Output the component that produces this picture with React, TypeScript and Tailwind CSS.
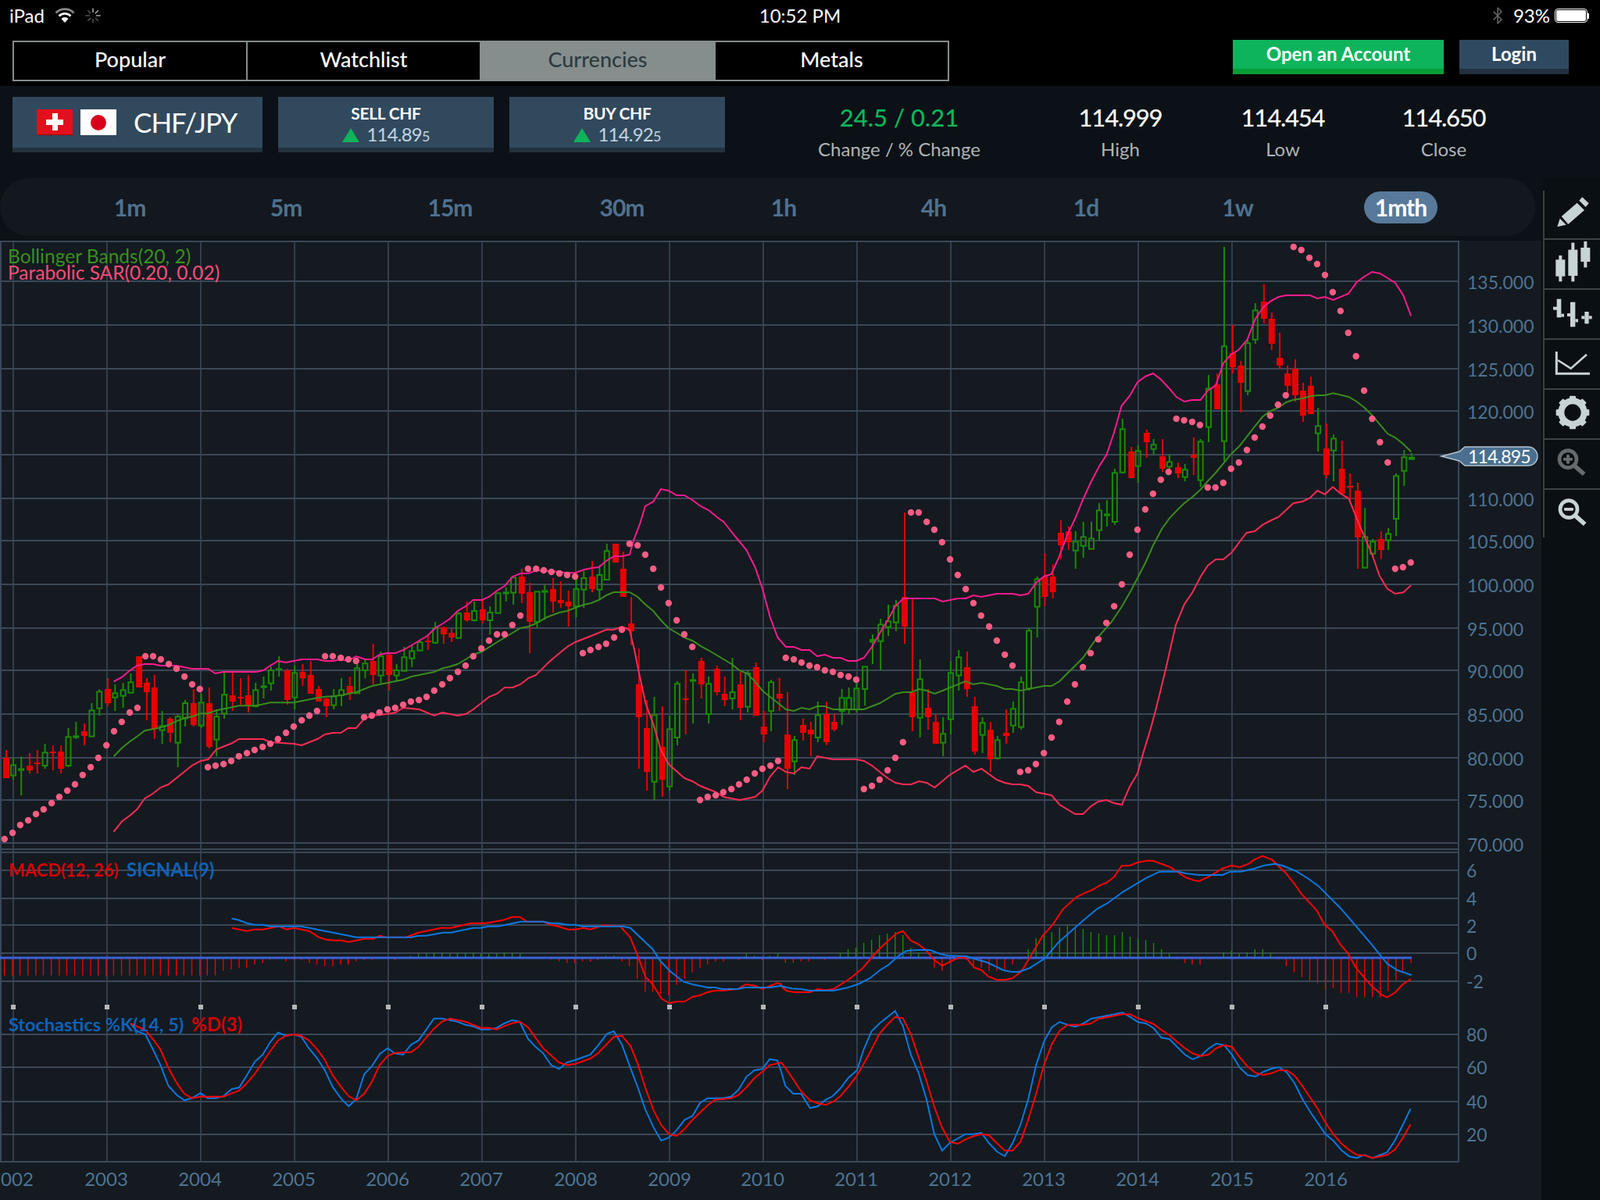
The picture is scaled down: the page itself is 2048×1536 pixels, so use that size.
import { Bluetooth } from "lucide-react";

// chart data is kept in the pixel grid of three main-chart crops and two indicator crops
type Map = (x: number, y: number) => [number, number];
const A: Map = (x, y) => [x / 2.24, 640 + y / 3];
const B: Map = (x, y) => [700 + x / 2.24, 640 + y / 3];
const C: Map = (x, y) => [1340 + x / 2.613, 300 + y / 3];
const D: Map = (x, y) => [x / 1.568, 1080 + y / 3];
const E: Map = (x, y) => [1000 + x / 1.496, 1080 + y / 3];

type Candle = [0 | 1, number, number, number, number, number];
const G = 1;
const R = 0;

const candlesA: Candle[] = [
  [R, 18, 960, 990, 1068, 1068], [G, 38, 990, 1018, 1058, 1074], [G, 61, 985, 1030, 1040, 1134], [R, 85, 972, 1020, 1038, 1050],
  [R, 107, 960, 1008, 1014, 1050], [G, 129, 936, 970, 1020, 1032], [R, 152, 942, 966, 972, 1038], [R, 175, 942, 966, 1032, 1050],
  [G, 196, 876, 910, 1020, 1026], [G, 218, 852, 904, 914, 918], [R, 242, 858, 888, 906, 942], [G, 263, 780, 808, 908, 908],
  [G, 285, 726, 736, 800, 828], [R, 309, 684, 726, 780, 792], [G, 330, 708, 742, 758, 810], [G, 353, 702, 730, 752, 798],
  [G, 375, 666, 700, 740, 742], [R, 399, 600, 600, 720, 720], [R, 421, 684, 702, 738, 846], [R, 443, 672, 720, 880, 918],
  [G, 465, 810, 868, 884, 936], [R, 488, 834, 840, 894, 930], [G, 510, 824, 832, 932, 1026], [G, 531, 768, 780, 838, 870],
  [R, 555, 726, 780, 864, 870], [G, 577, 744, 778, 866, 876], [R, 600, 720, 780, 948, 954], [G, 621, 810, 832, 920, 984],
  [G, 643, 660, 748, 820, 840], [R, 667, 660, 750, 774, 810], [R, 690, 684, 756, 762, 786], [R, 712, 672, 750, 792, 816],
  [G, 733, 702, 730, 792, 796], [G, 756, 678, 712, 722, 762], [G, 777, 640, 654, 704, 732], [G, 800, 600, 646, 652, 678],
  [R, 824, 648, 654, 768, 786], [G, 845, 636, 664, 758, 804], [R, 868, 630, 660, 684, 714], [R, 891, 618, 672, 744, 744],
  [R, 914, 714, 726, 774, 774], [R, 936, 760, 762, 792, 834], [G, 957, 726, 754, 788, 804], [G, 979, 684, 730, 750, 792],
  [R, 1003, 678, 714, 744, 768], [G, 1024, 630, 646, 742, 742], [G, 1047, 612, 628, 654, 684], [R, 1070, 552, 618, 672, 708],
  [G, 1092, 582, 600, 674, 704], [R, 1116, 588, 594, 672, 732], [G, 1137, 630, 654, 674, 696], [G, 1159, 564, 604, 656, 660],
  [G, 1181, 558, 580, 608, 642], [G, 1204, 540, 546, 578, 580], [R, 1227, 516, 540, 546, 576], [G, 1248, 468, 492, 548, 552],
  [R, 1272, 486, 488, 516, 552], [R, 1295, 492, 510, 528, 546], [G, 1315, 430, 436, 530, 530], [R, 1339, 390, 432, 462, 468],
  [G, 1360, 390, 426, 462, 466], [R, 1384, 384, 420, 462, 474], [G, 1405, 408, 432, 462, 516], [G, 1428, 355, 358, 434, 436],
  [G, 1451, 336, 352, 362, 390], [G, 1472, 298, 298, 356, 402], [R, 1496, 264, 294, 360, 396], [R, 1519, 318, 354, 468, 588],
  [G, 1540, 352, 352, 468, 490], [G, 1562, 326, 346, 356, 460],
];

const candlesB: Candle[] = [
  [R, 18, 300, 342, 390, 432], [R, 40, 312, 384, 396, 414], [R, 62, 348, 390, 408, 486], [G, 84, 300, 342, 408, 450],
  [G, 106, 272, 300, 344, 414], [R, 130, 234, 294, 342, 354], [G, 151, 250, 288, 344, 380], [G, 172, 168, 196, 306, 308],
  [R, 197, 168, 168, 240, 240], [R, 219, 198, 264, 372, 372], [R, 242, 372, 474, 504, 558], [R, 264, 570, 708, 834, 1032],
  [R, 287, 768, 876, 1044, 1116], [G, 308, 756, 826, 1082, 1152], [R, 331, 792, 948, 1074, 1140], [G, 352, 828, 880, 1100, 1116],
  [G, 374, 696, 706, 912, 942], [R, 398, 654, 762, 768, 900], [G, 419, 666, 688, 698, 858], [R, 443, 606, 618, 708, 762],
  [G, 464, 678, 706, 822, 858], [R, 488, 636, 648, 738, 750], [R, 510, 678, 744, 768, 792], [G, 532, 606, 738, 762, 804],
  [R, 555, 660, 708, 798, 846], [G, 576, 654, 666, 794, 816], [R, 600, 624, 642, 828, 828], [R, 622, 810, 870, 900, 930],
  [G, 643, 690, 700, 810, 888], [R, 667, 684, 744, 762, 810], [R, 690, 738, 900, 1032, 1110], [G, 710, 906, 922, 1004, 1056],
  [R, 735, 840, 864, 894, 924], [R, 757, 852, 882, 900, 984], [G, 777, 774, 826, 912, 930], [R, 802, 774, 822, 930, 942],
  [R, 824, 822, 852, 882, 888], [G, 846, 726, 760, 810, 864], [G, 866, 720, 760, 804, 822], [G, 888, 700, 724, 804, 816],
  [G, 912, 640, 640, 726, 790], [G, 934, 516, 534, 548, 630], [G, 957, 456, 478, 542, 654], [G, 979, 402, 466, 488, 522],
  [G, 1001, 384, 406, 470, 504], [R, 1026, 48, 372, 486, 552], [R, 1048, 378, 738, 834, 888], [G, 1070, 612, 688, 836, 912],
  [R, 1093, 726, 798, 834, 882], [R, 1115, 822, 852, 936, 936], [G, 1136, 834, 898, 932, 984], [G, 1158, 618, 664, 842, 900],
  [G, 1181, 576, 604, 674, 732], [R, 1205, 582, 642, 726, 756], [R, 1227, 756, 792, 966, 978], [G, 1249, 834, 856, 902, 972],
  [R, 1272, 852, 882, 996, 1044], [G, 1292, 906, 922, 992, 996], [R, 1317, 804, 894, 906, 936], [G, 1337, 774, 802, 866, 894],
  [G, 1360, 678, 700, 872, 882], [G, 1382, 492, 502, 724, 732], [G, 1406, 294, 304, 410, 528], [R, 1428, 204, 294, 372, 408],
];

const candlesC: Candle[] = [
  [R, 20, 1266, 1314, 1374, 1398], [R, 47, 1098, 1146, 1194, 1248], [R, 73, 1122, 1140, 1182, 1212], [G, 96, 1140, 1180, 1214, 1284],
  [G, 122, 1104, 1162, 1196, 1242], [G, 149, 1104, 1168, 1208, 1208], [G, 175, 1032, 1060, 1136, 1176], [G, 201, 1020, 1072, 1082, 1122],
  [G, 227, 900, 916, 1104, 1116], [G, 253, 708, 748, 914, 918], [R, 283, 816, 834, 936, 936], [G, 305, 810, 832, 890, 954],
  [R, 334, 750, 762, 798, 858], [G, 357, 786, 808, 824, 846], [R, 387, 786, 852, 900, 912], [G, 410, 846, 874, 892, 900],
  [R, 439, 876, 894, 918, 936], [G, 462, 882, 904, 932, 948], [R, 491, 780, 846, 858, 924], [G, 514, 786, 796, 944, 970],
  [G, 541, 540, 592, 740, 798], [R, 570, 534, 576, 672, 672], [G, 593, 48, 430, 794, 870], [R, 622, 348, 456, 510, 534],
  [R, 649, 486, 504, 570, 684], [G, 672, 402, 418, 602, 618], [G, 697, 264, 292, 404, 420], [R, 726, 192, 258, 324, 342],
  [R, 752, 300, 324, 420, 444], [R, 779, 378, 474, 504, 516], [R, 805, 504, 534, 582, 610], [R, 831, 480, 516, 618, 642],
  [R, 857, 570, 600, 696, 720], [R, 883, 546, 582, 690, 690], [G, 907, 666, 736, 764, 834], [R, 935, 726, 822, 924, 936],
  [G, 959, 768, 784, 830, 948], [R, 987, 792, 900, 996, 996], [R, 1014, 918, 966, 972, 1020], [R, 1040, 954, 984, 1164, 1284],
  [G, 1064, 1050, 1162, 1280, 1280], [G, 1090, 1170, 1180, 1226, 1236], [R, 1118, 1140, 1170, 1212, 1248], [G, 1142, 1128, 1150, 1174, 1212],
  [G, 1168, 918, 928, 1092, 1158], [G, 1195, 828, 856, 908, 966], [G, 1220, 840, 854, 866, 866],
];

const up4 = [326,697,350,680,372,655,393,636,415,630,438,630,460,636,483,636,505,636,528,642,550,648,597,648,617,666,640,660,735,660,755,654,775,636,797,618,820,624,842,618,865,612,910,612,932,618,955,618,977,612,998,618,1021,600,1047,612,1067,612,1088,594,1110,588,1134,588,1156,576,1180,558,1202,540,1225,522,1248,492,1270,474,1290,456,1312,426,1335,408,1357,384,1382,384,1402,372,1425,348,1447,330,1470,294,1492,282,1515,282,1537,270,1568,272];
const up5 = [36,276,58,280,81,280,106,268,127,262,149,258,170,234,192,216,215,216,237,210,250,150,267,90,282,24,305,6,327,-42,349,-36,372,-18,394,-18,417,0,441,24,464,39,491,69,507,84,528,120,550,156,572,192,597,258,618,340,640,450,662,528,685,564,708,564,730,576,753,576,775,600,797,594,820,606,842,606,864,618,887,618,909,606,932,564,955,510,977,462,999,408,1022,378,1112,378,1135,390,1178,378,1201,378,1223,366,1246,372,1290,360,1335,360,1358,366,1380,360,1403,318,1425,294];
const up6 = [15,1305,40,1240,70,1150,95,1090,120,1020,148,950,175,890,200,845,225,760,250,658,277,620,303,568,330,545,355,534,382,558,408,590,434,625,460,642,486,636,514,636,538,600,565,580,590,495,615,462,640,445,670,405,697,325,724,280,750,255,775,240,800,234,880,234,905,246,930,240,958,252,1008,228,1036,184,1062,162,1088,144,1114,150,1140,168,1165,186,1192,234,1218,313];

const mid4 = [326,985,350,952,372,928,393,908,415,886,438,880,460,874,483,864,505,850,528,838,550,832,575,820,597,820,620,808,665,796,685,790,735,790,775,778,842,778,865,772,910,760,932,755,955,754,977,750,1021,738,1067,714,1134,696,1156,690,1180,678,1245,660,1270,646,1290,640,1312,630,1335,612,1357,594,1382,582,1425,546,1470,510,1492,492,1515,486,1537,474,1568,450];
const mid5 = [36,432,58,426,81,414,106,402,127,396,149,384,170,366,192,354,237,354,260,372,283,402,305,426,327,462,349,492,372,510,394,528,417,540,440,560,462,576,485,594,507,612,530,630,552,654,574,666,596,696,618,732,640,756,663,780,685,804,708,810,730,798,753,804,775,792,797,792,820,804,909,804,955,780,1000,744,1022,738,1045,738,1067,726,1089,732,1112,744,1135,732,1200,696,1223,708,1246,702,1290,714,1313,726,1335,726,1358,732,1403,720,1425,714,1447,714,1470,696,1492,666,1515,636,1537,606,1568,546];
const midJoin: [number, number][] = [[1406, 815]];
const mid6 = [215,1490,250,1430,280,1370,303,1320,330,1260,355,1195,385,1130,410,1090,435,1060,460,1032,487,1008,514,980,540,945,565,915,590,880,615,845,645,812,670,775,697,735,722,700,745,680,775,665,800,645,825,635,855,630,880,622,905,618,930,618,958,610,1010,624,1036,642,1062,665,1088,695,1114,730,1140,766,1165,780,1192,805,1218,835];

const low4 = [326,1274,350,1234,372,1212,393,1188,415,1146,438,1128,460,1104,483,1092,528,1044,550,1020,575,1002,597,996,620,958,665,934,685,918,755,918,775,930,842,936,865,942,910,918,932,900,955,894,977,894,998,876,1021,876,1044,840,1067,828,1110,822,1134,816,1156,798,1202,804,1245,828,1268,816,1312,828,1335,822,1357,804,1382,778,1402,756,1425,744,1447,720,1470,720,1492,708,1515,684,1537,672,1568,630];
const low5 = [20,606,58,564,81,546,127,522,170,498,192,498,215,486,237,498,250,570,262,650,283,780,305,860,327,960,349,1014,394,1068,417,1080,440,1098,485,1122,507,1140,552,1152,597,1140,618,1116,640,1062,663,1026,685,1044,708,1050,730,1026,753,1032,775,984,820,996,887,996,909,1002,932,1020,977,1068,1000,1086,1022,1092,1045,1092,1067,1080,1089,1086,1112,1104,1157,1054,1200,1020,1223,1044,1246,1032,1290,1074,1313,1086,1335,1092,1358,1092,1380,1098,1403,1122,1447,1134,1470,1170,1515,1206,1537,1206,1560,1176];
const lowJoin: [number, number][] = [[1406, 1026], [1416, 1024], [1426, 1028], [1436, 1030], [1446, 1007], [1456, 990], [1463, 965], [1473, 932], [1479, 910], [1492, 857], [1505, 800]];
const low6 = [460,1420,487,1375,514,1315,538,1272,565,1248,590,1248,618,1222,645,1180,668,1146,695,1140,722,1115,750,1098,775,1085,800,1058,825,1032,855,1026,880,1012,905,984,930,998,956,970,982,995,1010,1015,1036,1090,1062,1160,1088,1230,1112,1310,1138,1360,1165,1380,1192,1375,1218,1348];

const sar4 = [13,1302,36,1278,58,1248,81,1230,103,1206,125,1188,148,1164,170,1140,193,1116,215,1092,237,1056,260,1026,282,990,305,942,327,888,349,852,372,816,394,798,417,600,439,600,461,612,484,630,506,648,529,678,551,708,573,726,596,1026,618,1020,641,1014,663,1002,685,984,708,972,730,960,753,948,775,936,797,918,820,894,842,870,865,846,887,828,909,810,932,600,954,600,977,606,999,612,1021,618,1044,834,1066,828,1088,816,1111,804,1133,798,1156,786,1178,774,1201,768,1223,756,1245,732,1268,708,1290,684,1313,660,1335,636,1357,600,1380,570,1402,540,1425,516,1447,516,1469,480,1492,444,1514,264,1537,264,1559,270];
const sar5 = [13,276,36,282,58,288,81,294,103,588,125,576,148,564,170,552,193,528,215,498,237,168,260,174,282,210,305,264,327,336,349,396,372,462,394,516,417,564,439,1152,461,1140,484,1134,506,1122,529,1110,551,1092,573,1074,596,1050,618,1032,641,1020,663,1002,685,606,708,612,730,624,753,636,775,642,797,654,820,660,842,672,865,678,887,690,909,1110,932,1098,954,1074,977,1038,999,990,1021,930,1044,48,1066,48,1089,84,1111,114,1133,162,1156,228,1178,288,1201,342,1223,396,1245,444,1268,486,1290,540,1313,594,1335,636,1357,1044,1380,1038,1402,1014,1425,972,1447,912,1469,852,1492,774,1514,708,1537,642,1559,588];
const sar6 = [172,1555,199,1492,225,1428,251,1344,277,1230,303,1134,329,1056,355,996,381,942,407,912,433,708,459,714,486,720,512,732,538,972,564,972,590,954,616,900,642,876,669,828,695,780,721,738,747,696,773,654,799,618,825,48,851,60,878,90,904,114,930,156,956,222,982,294,1008,378,1034,468,1061,600,1088,708,1114,798,1140,876,1165,1284,1191,1278,1217,1260];

const sigD = [465,287,480,293,496,305,511,311,527,311,543,317,605,317,700,353,715,359,825,359,840,353,855,353,890,341,905,341,950,323,965,323,980,317,1000,317,1045,299,1090,299,1105,305,1120,305,1140,311,1155,311,1170,317,1250,317,1265,323,1280,350,1310,405,1325,450,1345,490,1372,530,1390,540,1420,552,1435,552,1450,558,1480,558,1495,552,1545,552,1568,545];
const macdD = [465,323,495,335,510,329,527,329,560,317,575,329,590,323,620,335,640,359,655,368,670,371,685,371,700,377,730,365,750,365,762,353,775,359,815,359,840,341,885,323,905,323,945,305,975,305,1010,293,1028,281,1043,281,1058,299,1090,299,1105,311,1120,317,1140,329,1155,329,1170,323,1185,329,1210,313,1245,317,1265,360,1280,430,1295,510,1310,540,1328,595,1343,612,1358,606,1374,606,1390,588,1405,582,1420,570,1435,564,1450,564,1480,558,1497,540,1515,545,1530,558,1560,535,1568,540];
const sigE = [0,547,20,556,38,558,55,564,100,564,128,552,150,537,170,516,190,484,205,466,225,430,240,411,260,408,285,408,305,424,320,430,355,432,375,445,395,456,425,485,440,492,455,492,475,478,505,440,530,380,575,300,605,250,625,228,655,184,700,130,725,107,760,107,775,114,800,120,845,120,860,107,880,107,905,96,925,83,945,77,960,84,985,104,1010,135,1030,165,1070,245,1100,315,1130,385,1160,460,1180,486,1195,496,1207,505];
const macdE = [0,547,10,565,25,570,55,570,70,558,85,562,100,558,130,520,155,480,175,432,190,400,220,345,233,335,248,372,262,385,278,410,292,445,308,468,322,455,340,436,355,440,370,476,383,485,397,510,413,523,428,523,443,516,460,490,475,440,500,355,520,310,540,250,565,205,580,190,595,178,610,160,622,150,637,128,652,84,667,84,682,72,700,65,712,65,745,90,775,130,790,140,800,144,820,125,845,95,862,83,878,90,895,77,905,62,922,47,940,62,965,110,985,160,995,190,1025,255,1040,310,1055,335,1070,385,1085,420,1100,475,1130,545,1150,580,1160,590,1175,572,1190,540,1205,520];

const histD: number[] = [9,506,25,506,40,506,56,506,72,506,87,506,103,506,119,506,134,506,150,506,166,506,182,506,197,506,213,506,228,506,244,506,260,506,275,506,291,506,307,506,322,506,338,506,354,506,369,506,385,506,401,506,416,506,432,506,448,488,464,482,480,476,495,476,511,464,527,458,542,446,574,452,590,446,605,446,621,458,636,464,652,470,668,470,684,464,699,464,715,452,731,446,746,446,793,446,824,430,840,422,856,422,871,418,887,418,903,422,918,418,934,418,950,418,965,422,981,422,997,422,1012,418,1028,418,1044,422,1106,444,1122,452,1138,458,1153,458,1169,452,1185,452,1200,446,1216,430,1232,430,1248,452,1263,470,1279,518,1295,568,1310,570,1326,576,1342,582,1358,542,1374,518,1389,494,1405,476,1420,464,1436,452,1452,452,1483,446,1498,422,1514,430,1530,446,1545,430,1561,422];
const histE: number[] = [8,458,23,458,38,452,53,452,83,446,113,418,128,405,143,399,158,381,173,369,188,351,203,345,218,339,233,351,248,399,263,417,278,444,293,476,308,488,323,458,338,444,353,444,368,476,383,476,398,488,413,488,428,482,443,464,458,444,473,405,488,363,503,345,518,339,533,321,548,315,563,321,578,327,593,339,608,345,623,351,638,351,653,339,668,357,683,363,698,369,713,381,728,405,743,421,758,444,773,458,787,464,802,464,817,444,847,417,862,411,877,421,892,417,907,405,922,405,937,417,952,444,967,470,982,494,997,512,1012,524,1027,536,1042,560,1057,554,1072,572,1087,572,1102,590,1117,590,1132,590,1147,590,1162,566,1177,524,1190,488,1206,458];

const kD = [262,690,275,720,292,732,307,790,322,850,338,930,355,965,370,985,385,977,402,958,417,977,432,977,448,970,465,942,480,936,495,890,511,838,527,810,543,760,558,725,574,737,590,732,605,742,620,785,637,825,652,870,668,935,685,980,700,1008,715,980,731,885,746,855,762,808,778,785,793,805,809,810,825,772,840,755,855,715,871,671,887,671,903,677,918,683,934,695,950,701,965,713,981,713,997,707,1012,690,1028,677,1043,683,1060,750,1075,780,1090,805,1106,850,1122,865,1138,840,1155,830,1170,820,1185,810,1200,775,1218,730,1232,720,1248,770,1265,860,1280,935,1295,1020,1312,1090,1327,1140,1343,1128,1358,1100,1374,1060,1390,1045,1405,995,1420,977,1450,977,1467,971,1482,945,1498,895,1514,870,1530,865,1545,827,1560,832,1568,875];
const dD = [262,690,292,716,307,750,322,790,338,860,355,920,370,960,385,977,402,971,448,971,480,948,495,920,511,885,527,840,543,795,558,755,574,737,590,732,605,738,620,755,637,790,652,830,668,890,685,935,700,970,715,985,731,960,746,915,762,850,778,815,793,803,825,800,840,780,855,745,871,710,887,683,903,671,934,683,965,707,981,707,997,713,1012,701,1028,689,1043,683,1060,705,1075,745,1090,785,1122,840,1138,850,1155,845,1185,825,1200,805,1232,742,1248,737,1265,775,1280,845,1295,935,1312,1025,1327,1080,1343,1115,1358,1122,1374,1095,1390,1060,1420,1005,1435,983,1467,977,1482,965,1498,935,1514,900,1530,875,1545,850,1568,840];
const kE = [8,930,23,960,38,960,55,1015,70,1008,85,983,98,970,113,940,128,900,145,870,158,790,173,720,188,690,218,642,233,700,248,810,263,880,278,980,293,1115,308,1178,323,1148,353,1115,368,1115,383,1110,398,1150,413,1182,428,1200,443,1150,458,1080,473,980,488,850,503,760,518,705,533,684,548,695,563,703,578,690,593,672,638,655,653,648,668,665,683,685,698,690,713,708,728,745,743,750,773,810,788,828,803,815,818,787,833,767,848,773,863,810,878,860,893,888,908,894,923,876,938,864,953,858,968,878,983,920,998,980,1013,1030,1042,1115,1057,1140,1072,1175,1087,1200,1102,1207,1117,1195,1132,1207,1160,1185,1175,1140,1190,1080,1205,1018];
const dE = [8,860,23,905,38,950,55,985,70,997,85,1003,100,990,113,970,130,930,145,890,165,820,188,730,203,695,218,665,233,670,248,730,263,820,278,910,293,1010,308,1090,323,1145,338,1152,353,1135,368,1123,383,1115,398,1120,413,1150,428,1178,443,1178,458,1145,473,1060,488,960,503,850,518,770,533,718,548,695,578,695,593,690,608,672,653,655,668,655,683,670,713,692,728,715,743,735,773,785,788,805,803,815,818,810,833,785,848,773,863,780,878,820,893,855,908,880,923,888,938,882,953,870,968,870,983,890,998,930,1013,975,1028,1020,1042,1070,1057,1115,1072,1150,1087,1175,1102,1195,1117,1197,1132,1207,1160,1195,1175,1175,1190,1130,1205,1078];

const conv = (flat: number[], m: Map) => {
  const out: [number, number][] = [];
  for (let i = 0; i < flat.length; i += 2) out.push(m(flat[i], flat[i + 1]));
  return out;
};
const pts = (p: [number, number][]) => p.map(([x, y]) => `${x.toFixed(1)},${y.toFixed(1)}`).join(" ");

const upper = pts([...conv(up4, A), ...conv(up5, B), ...conv(up6, C)]);
const middle = pts([...conv(mid4, A), ...conv(mid5, B), ...midJoin, ...conv(mid6, C)]);
const lower = pts([...conv(low4, A), ...conv(low5, B), ...lowJoin, ...conv(low6, C)]);
const sarDots = [...conv(sar4, A), ...conv(sar5, B), ...conv(sar6, C)];
const signal = pts([...conv(sigD, D), ...conv(sigE, E)]);
const macd = pts([...conv(macdD, D), ...conv(macdE, E)]);
const stochK = pts([...conv(kD, D), ...conv(kE, E)]);
const stochD = pts([...conv(dD, D), ...conv(dE, E)]);
const ZERO = 1226;
const hist = [...conv(histD, D), ...conv(histE, E)];

const allCandles = [
  ...candlesA.map((c) => [c, A] as const),
  ...candlesB.map((c) => [c, B] as const),
  ...candlesC.map((c) => [c, C] as const),
];

const vGrid = Array.from({ length: 15 }, (_, i) => 17 + i * 120);
const hGrid = [309, 360, 416, 472, 526, 582, 638, 692, 748, 804, 858, 914, 970, 1024, 1079, 1087, 1091, 1114, 1150, 1184, 1220, 1256, 1324, 1366, 1410, 1452, 1487];

const prices = [
  ["135.000", 362], ["130.000", 418], ["125.000", 474], ["120.000", 528], ["110.000", 640], ["105.000", 694],
  ["100.000", 750], ["95.000", 806], ["90.000", 860], ["85.000", 916], ["80.000", 972], ["75.000", 1026], ["70.000", 1082],
] as const;
const subAxis = [["6", 1115], ["4", 1151], ["2", 1186], ["0", 1221], ["-2", 1257], ["80", 1325], ["60", 1367], ["40", 1411], ["20", 1453]] as const;
const years = [["002", 22], ["2003", 136], ["2004", 256], ["2005", 376], ["2006", 496], ["2007", 616], ["2008", 737], ["2009", 857], ["2010", 976], ["2011", 1096], ["2012", 1216], ["2013", 1336], ["2014", 1456], ["2015", 1577], ["2016", 1697]] as const;

const RED = "#e60000";
const GREEN = "#1c8a00";

function CandleMark({ c, m }: { c: Candle; m: Map }) {
  const [type, zx, hi, top, bot, lo] = c;
  const [x, yHi] = m(zx, hi);
  const yTop = m(zx, top)[1];
  const yBot = m(zx, bot)[1];
  const yLo = m(zx, lo)[1];
  const col = type === G ? GREEN : RED;
  const solid = type === R || yBot - yTop < 5;
  return (
    <g>
      <line x1={x} x2={x} y1={yHi} y2={yTop} stroke={col} strokeWidth={2} />
      <line x1={x} x2={x} y1={yBot} y2={yLo} stroke={col} strokeWidth={2} />
      {solid ? (
        <rect x={x - 4} y={yTop} width={8} height={yBot - yTop} fill={col} />
      ) : (
        <rect x={x - 3} y={yTop} width={6} height={yBot - yTop} fill="none" stroke={col} strokeWidth={2} />
      )}
    </g>
  );
}

function Chart() {
  return (
    <svg width={1973} height={1228} viewBox="0 308 1973 1228" className="block font-[Lato,sans-serif]">
      {hGrid.map((y) => (
        <line key={y} x1={0} x2={1868} y1={y} y2={y} stroke="#3b4757" strokeWidth={2} />
      ))}
      {vGrid.map((x) => (
        <line key={x} x1={x} x2={x} y1={309} y2={1487} stroke="#3b4757" strokeWidth={1.6} />
      ))}
      <line x1={1} x2={1} y1={309} y2={1487} stroke="#3b4757" strokeWidth={2} />
      <line x1={1867} x2={1867} y1={309} y2={1487} stroke="#3b4757" strokeWidth={2} />
      {vGrid.map((x) => (
        <rect key={x} x={x - 3} y={1286} width={6} height={6} fill="#b5b8ba" />
      ))}

      {allCandles.map(([c, m], i) => (
        <CandleMark key={i} c={c} m={m} />
      ))}
      <polyline points={upper} fill="none" stroke="#ff1a8c" strokeWidth={2} />
      <polyline points={middle} fill="none" stroke="#3c8a1e" strokeWidth={2} />
      <polyline points={lower} fill="none" stroke="#ff2a55" strokeWidth={2} />
      {sarDots.map(([x, y], i) => (
        <circle key={i} cx={x} cy={y} r={4.2} fill="#ff5c85" />
      ))}

      {hist.map(([x, y], i) => (
        <line key={i} x1={x} x2={x} y1={ZERO} y2={y} stroke={y < ZERO ? GREEN : "#f00000"} strokeWidth={1.4} />
      ))}
      <line x1={0} x2={1807} y1={ZERO} y2={ZERO} stroke="#3a62d8" strokeWidth={3} />
      <polyline points={macd} fill="none" stroke="#ff0000" strokeWidth={2} />
      <polyline points={signal} fill="none" stroke="#0a78e0" strokeWidth={2} />
      <polyline points={stochK} fill="none" stroke="#0a78e0" strokeWidth={2} />
      <polyline points={stochD} fill="none" stroke="#ff0000" strokeWidth={2} />

      <text x={10} y={337} fontSize={24.5} fill="#3a8f1e">Bollinger Bands(20, 2)</text>
      <text x={10} y={358} fontSize={24.5} fill="#ff4d7a">Parabolic SAR(0.20, 0.02)</text>
      <text x={11} y={1122} fontSize={22} fontWeight={700} fill="#d40000">MACD(12, 26)</text>
      <text x={162} y={1122} fontSize={24} fontWeight={700} fill="#0e62b8">SIGNAL(9)</text>
      <text x={11} y={1320} fontSize={23.5} fontWeight={700} fill="#0e62b8">Stochastics %K(14, 5)</text>
      <text x={245} y={1320} fontSize={24} fontWeight={700} fill="#d40000">%D(3)</text>

      {prices.map(([t, y]) => (
        <text key={t} x={1878} y={y + 8} fontSize={23} fill="#4f7391">{t}</text>
      ))}
      {subAxis.map(([t, y]) => (
        <text key={t} x={1877} y={y + 8} fontSize={23} fill="#4f7391">{t}</text>
      ))}
      {years.map(([t, x]) => (
        <text key={t} x={x} y={1518} fontSize={24} textAnchor="middle" fill="#4f7391">{t}</text>
      ))}

      <path d="M1845 584 L1868 578 L1875 572 H1956 A12 12 0 0 1 1956 596 H1875 L1868 590 Z" fill="#4a6f90" stroke="#b4c2cc" strokeWidth={1.5} />
      <text x={1879} y={593} fontSize={23} letterSpacing={-0.8} fill="#fff">114.895</text>
    </svg>
  );
}

const ICON = "#c8d3d6";

function Pencil() {
  return (
    <svg width={50} height={50} viewBox="440 50 150 150">
      <path d="M456 180 L466 148 L490 172 Z" fill={ICON} />
      <path d="M472 140 L532 88 L560 116 L498 170 Z" fill={ICON} />
      <path d="M540 79 L552 66 L577 90 L565 104 Z" fill={ICON} />
    </svg>
  );
}

function CandlesIcon() {
  return (
    <svg width={50} height={56} viewBox="440 235 150 168" fill={ICON}>
      <rect x={462} y={292} width={12} height={100} />
      <rect x={450} y={308} width={36} height={64} />
      <rect x={510} y={243} width={12} height={149} />
      <rect x={498} y={270} width={36} height={100} />
      <rect x={558} y={238} width={12} height={100} />
      <rect x={546} y={262} width={36} height={54} />
    </svg>
  );
}

function BarsIcon() {
  return (
    <svg width={52} height={40} viewBox="438 448 156 120" fill={ICON}>
      <rect x={455} y={453} width={17} height={71} />
      <rect x={441} y={483} width={17} height={12} />
      <rect x={472} y={510} width={11} height={12} />
      <rect x={507} y={465} width={19} height={95} />
      <rect x={495} y={508} width={12} height={12} />
      <rect x={526} y={530} width={11} height={12} />
      <rect x={562} y={502} width={16} height={46} />
      <rect x={550} y={518} width={12} height={12} />
      <rect x={578} y={518} width={12} height={12} />
    </svg>
  );
}

function LineIcon() {
  return (
    <svg width={46} height={32} viewBox="450 654 138 96">
      <path d="M457 657 V742 H585" fill="none" stroke={ICON} strokeWidth={9} />
      <path d="M462 690 L512 722 L573 668" fill="none" stroke={ICON} strokeWidth={8} />
    </svg>
  );
}

function GearIcon() {
  return (
    <svg width={44} height={44} viewBox="-66 -66 132 132">
      <circle r={44} fill="none" stroke={ICON} strokeWidth={24} />
      {[0, 45, 90, 135, 180, 225, 270, 315].map((a) => (
        <rect key={a} x={-12} y={-64} width={24} height={18} rx={3} fill={ICON} transform={`rotate(${a})`} />
      ))}
    </svg>
  );
}

function ZoomIcon({ plus, color }: { plus?: boolean; color: string }) {
  return (
    <svg width={40} height={38} viewBox="0 0 120 114">
      <circle cx={48} cy={44} r={33} fill="none" stroke={color} strokeWidth={14} />
      <path d="M74 70 L110 102" stroke={color} strokeWidth={17} />
      <rect x={30} y={39} width={36} height={11} rx={4} fill={color} />
      {plus && <rect x={42} y={27} width={12} height={35} rx={4} fill={color} />}
    </svg>
  );
}

const tabs = [
  { t: "Popular", cls: "w-[299px] border-r-2 border-[#868d8d] text-white" },
  { t: "Watchlist", cls: "w-[297px] text-white" },
  { t: "Currencies", cls: "w-[302px] bg-[#868d8d] text-[#2e3a40]" },
  { t: "Metals", cls: "w-[297px] text-white" },
];
const frames = ["1m", "5m", "15m", "30m", "1h", "4h", "1d", "1w", "1mth"];
const stats = [
  { v: "114.999", l: "High", w: "w-[264px]" },
  { v: "114.454", l: "Low", w: "w-[152px]" },
  { v: "114.650", l: "Close", w: "w-[260px]" },
];

function StatusBar() {
  return (
    <div className="h-[40px] grid grid-cols-3 items-center px-3 font-['Liberation_Sans',sans-serif] text-white text-[24px]">
      <div className="flex items-center gap-[13px]">
        <span>iPad</span>
        <svg width={26} height={20} viewBox="0 0 26 20" fill="none" stroke="#fff" strokeWidth={2.6}>
          <path d="M1.5 6.5 A16 16 0 0 1 24.5 6.5" stroke="#888" />
          <path d="M5.5 10.5 A10.5 10.5 0 0 1 20.5 10.5" />
          <path d="M13 19 L8.5 14 A6 6 0 0 1 17.5 14 Z" fill="#fff" stroke="none" />
        </svg>
        <svg width={20} height={20} viewBox="-10 -10 20 20" stroke="#aaa" strokeWidth={1.5}>
          {[0, 45, 90, 135, 180, 225, 270, 315].map((a) => (
            <line key={a} x1={0} x2={0} y1={-4} y2={-9.5} transform={`rotate(${a})`} opacity={a < 100 ? 1 : 0.5} />
          ))}
        </svg>
      </div>
      <div className="text-center">10:52 PM</div>
      <div className="flex items-center justify-end gap-[5px] pr-[2px]">
        <Bluetooth size={24} strokeWidth={1.5} className="text-[#666] mr-[3px]" />
        <span>93%</span>
        <div className="flex items-center ml-[1px]">
          <div className="w-[42px] h-[18px] rounded-[4px] border border-white p-[1px]">
            <div className="w-full h-full rounded-[2px] bg-white" />
          </div>
          <div className="w-[2px] h-[7px] bg-white" />
        </div>
      </div>
    </div>
  );
}

function Quote({ side, price, tail }: { side: string; price: string; tail: string }) {
  return (
    <div className="ml-5 w-[276px] h-[71px] bg-[#31495d] border-b-[6px] border-[#23313f] flex flex-col items-center justify-center pt-[6px]">
      <span className="text-white text-[21px] font-bold leading-[26px] tracking-[-0.3px]">{side}</span>
      <span className="flex items-center gap-[9px] text-[#c2d4e0] text-[24px] leading-[28px] tracking-[-0.8px]">
        <span className="w-0 h-0 border-x-[11px] border-x-transparent border-b-[18px] border-b-[#0db45b]" />
        <span>
          {price}
          <span className="text-[18px]">{tail}</span>
        </span>
      </span>
    </div>
  );
}

export default function App() {
  return (
    <div className="w-[2048px] h-[1536px] overflow-hidden bg-black font-[Lato,sans-serif] flex flex-col">
      <StatusBar />

      <div className="h-[70px] flex items-start">
        <div className="ml-4 mt-[12px] w-[1199px] h-[52px] border-2 border-[#868d8d] flex">
          {tabs.map((tab) => (
            <div key={tab.t} className={"flex items-center justify-center text-[27px] font-medium pb-[4px] " + tab.cls}>
              {tab.t}
            </div>
          ))}
        </div>
        <div className="ml-[363px] mt-[11px] w-[270px] h-[44px] bg-[#0db45b] border-b-[7px] border-[#0a9c36] flex items-center justify-center text-white text-[24px] font-bold pb-[2px]">
          Open an Account
        </div>
        <div className="ml-5 mt-[11px] w-[140px] h-[44px] bg-[#2f4a60] border-b-[7px] border-[#21303f] flex items-center justify-center text-white text-[24px] font-bold pb-[2px]">
          Login
        </div>
      </div>

      <div className="h-[118px] bg-[#0b1116] flex items-start pt-[14px]">
        <div className="ml-4 w-[320px] h-[71px] bg-[#31495d] border-b-[6px] border-[#23313f] flex items-center pl-[31px]">
          <div className="w-[46px] h-[33px] bg-[#e2101c] flex items-center justify-center relative border-b border-[#a00]">
            <div className="absolute w-[22px] h-[7px] bg-white" />
            <div className="absolute w-[7px] h-[22px] bg-white" />
          </div>
          <div className="ml-[10px] w-[46px] h-[33px] bg-white flex items-center justify-center">
            <div className="w-[20px] h-[20px] rounded-full bg-[#d8001c]" />
          </div>
          <span className="ml-[22px] text-white text-[35px] tracking-[-1px]">CHF/JPY</span>
        </div>
        <Quote side="SELL CHF" price="114.89" tail="5" />
        <Quote side="BUY CHF" price="114.92" tail="5" />
        <div className="ml-[72px] w-[302px] flex flex-col items-center mt-[6px]">
          <span className="text-[#0db45b] text-[31px] font-medium leading-[40px]">24.5 / 0.21</span>
          <span className="text-[#aeb3b6] text-[24px] leading-[42px]">Change / % Change</span>
        </div>
        {stats.map((s) => (
          <div key={s.l} className={s.w + " flex flex-col items-center mt-[6px]"}>
            <span className="text-white text-[31px] font-medium leading-[40px] tracking-[-1.2px]">{s.v}</span>
            <span className="text-[#aeb3b6] text-[24px] leading-[42px]">{s.l}</span>
          </div>
        ))}
      </div>

      <div className="flex-1 flex bg-[#0b1116]">
        <div className="w-[1973px]">
          <div className="h-[80px]">
            <div className="w-[1965px] h-[74px] rounded-full bg-[#13181e] pl-[66px] grid grid-cols-[200px_200px_220px_220px_194px_190px_200px_188px_230px] items-center">
              {frames.map((f) => (
                <div key={f} className="flex justify-center">
                  <span
                    className={
                      "text-[30px] font-bold h-[41px] leading-[41px] rounded-full tracking-[-1px] text-center " +
                      (f === "1mth" ? "w-[94px] bg-[#58799a] text-white" : "text-[#4f7190]")
                    }
                  >
                    {f}
                  </span>
                </div>
              ))}
            </div>
          </div>
          <div className="bg-[#141a20]">
            <Chart />
          </div>
        </div>
        <div className="w-[75px] bg-[#0a0f13] pt-[16px]">
          <div className="border-l-2 border-[#3d4144] h-[444px] ml-[2px] flex flex-col divide-y-2 divide-[#3d4144]">
            <div className="h-[63px] flex items-center justify-center pb-[6px]"><Pencil /></div>
            <div className="h-[64px] flex items-center justify-center pb-[5px]"><CandlesIcon /></div>
            <div className="h-[64px] flex items-center justify-center pb-[3px]"><BarsIcon /></div>
            <div className="h-[64px] flex items-center justify-center pb-[3px]"><LineIcon /></div>
            <div className="h-[64px] flex items-center justify-center pb-[5px]"><GearIcon /></div>
            <div className="h-[64px] flex items-center justify-center pb-[5px] pr-[3px]"><ZoomIcon plus color="#666a6d" /></div>
            <div className="h-[61px] flex items-center justify-center pb-[3px] pr-[1px]"><ZoomIcon color={ICON} /></div>
          </div>
        </div>
      </div>
    </div>
  );
}
